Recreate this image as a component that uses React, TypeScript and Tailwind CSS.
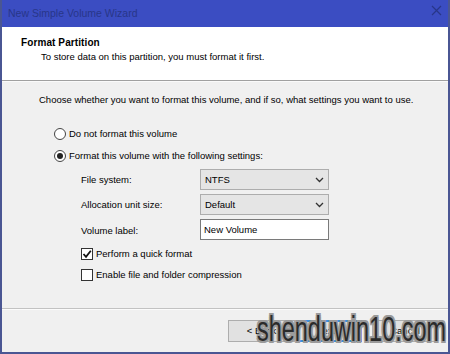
import React from "react";

function Chevron() {
  return (
    <svg width="9" height="6" viewBox="0 0 9 6" className="mr-[4px]">
      <polyline points="1,1 4.5,4.5 8,1" fill="none" stroke="#333" strokeWidth="1.3" />
    </svg>
  );
}

function Radio({ checked }: { checked?: boolean }) {
  return (
    <span className="w-[12px] h-[12px] rounded-full border border-[#444] bg-white flex items-center justify-center shrink-0">
      {checked && <span className="w-[6px] h-[6px] rounded-full bg-[#222]" />}
    </span>
  );
}

function Check({ checked }: { checked?: boolean }) {
  return (
    <span className="w-[12px] h-[12px] border border-[#333] bg-white flex items-center justify-center shrink-0">
      {checked && (
        <svg width="10" height="10" viewBox="0 0 10 10">
          <polyline points="1.5,5 4,7.8 8.8,1.8" fill="none" stroke="#111" strokeWidth="1.8" />
        </svg>
      )}
    </span>
  );
}

export default function App() {
  return (
    <div
      className="relative w-[450px] h-[354px] flex flex-col bg-[#f0f0f0] border-l-2 border-r-2 border-b-2 border-[#4a5693] text-[#000] overflow-hidden"
      style={{ fontFamily: '"Liberation Sans", Arial, sans-serif' }}
    >
      {/* Title bar */}
      <div className="h-[27px] bg-[#3b4dc2] flex items-center justify-between pl-[6px] pr-[6px] shrink-0">
        <span className="text-[10.5px] text-[#283689]">New Simple Volume Wizard</span>
        <svg width="11" height="11" viewBox="0 0 11 11" className="mb-[6px]">
          <path d="M1 1 L10 10 M10 1 L1 10" stroke="#283689" strokeWidth="1.2" />
        </svg>
      </div>

      {/* Header */}
      <div className="h-[53px] bg-white shrink-0 flex flex-col pl-[19px] pt-[9px]">
        <div className="text-[10px] font-bold leading-[13px] tracking-[0.1px]">Format Partition</div>
        <div className="text-[9.5px] leading-[12px] pl-[20px] mt-[2px]">
          To store data on this partition, you must format it first.
        </div>
      </div>
      <div className="h-px bg-[#a0a0a0] shrink-0" />
      <div className="h-px bg-[#fafafa] shrink-0" />

      {/* Body */}
      <div className="flex-1 flex flex-col pl-[37px] text-[9.5px] leading-[12px]">
        <div className="mt-[12px]">
          Choose whether you want to format this volume, and if so, what settings you want to use.
        </div>
        <div className="mt-[21px] ml-[15px] flex items-center gap-[3px] h-[14px]">
          <Radio />
          <span>Do not format this volume</span>
        </div>
        <div className="mt-[8px] ml-[15px] flex items-center gap-[3px] h-[14px]">
          <Radio checked />
          <span>Format this volume with the following settings:</span>
        </div>
        <div className="ml-[42px] mt-[6px] grid grid-cols-[119px_129px] gap-y-[4px]">
          <div className="flex items-center h-[21px]">File system:</div>
          <div className="h-[21px] border border-[#adadad] bg-[#e5e5e5] flex items-center justify-between pl-[4px]">
            <span>NTFS</span>
            <Chevron />
          </div>
          <div className="flex items-center h-[21px]">Allocation unit size:</div>
          <div className="h-[21px] border border-[#adadad] bg-[#e5e5e5] flex items-center justify-between pl-[4px]">
            <span>Default</span>
            <Chevron />
          </div>
          <div className="flex items-center h-[21px] pt-[2px]">Volume label:</div>
          <div className="h-[21px] border border-[#7a7a7a] bg-white flex items-center pl-[3px]">
            <span>New Volume</span>
          </div>
        </div>
        <div className="mt-[7px] ml-[42px] flex items-center gap-[3px] h-[14px]">
          <Check checked />
          <span>Perform a quick format</span>
        </div>
        <div className="mt-[7px] ml-[42px] flex items-center gap-[3px] h-[14px]">
          <Check />
          <span>Enable file and folder compression</span>
        </div>
      </div>

      {/* Footer */}
      <div className="h-px bg-[#c2c2c2] shrink-0" />
      <div className="h-px bg-[#fbfbfb] shrink-0" />
      <div className="h-[42px] shrink-0 flex items-start justify-end pr-[10px] pt-[10px] text-[9.5px]">
        <div className="w-[67px] h-[22px] border border-[#adadad] bg-[#e1e1e1] flex items-center justify-center">
          &lt; Back
        </div>
        <div className="ml-[2px] w-[65px] h-[22px] border-2 border-[#3c8ee0] bg-[#e1e1e1] flex items-center justify-center">
          Next &gt;
        </div>
        <div className="ml-[10px] w-[66px] h-[22px] border border-[#adadad] bg-[#e1e1e1] flex items-center justify-center">
          Cancel
        </div>
      </div>

      {/* Watermark */}
      <div
        className="absolute left-[255px] top-[309px] text-[35px] leading-[40px] text-[#2b2b2b] origin-left scale-x-[0.67] whitespace-nowrap"
        style={{
          fontFamily: '"Liberation Sans", Arial, sans-serif',
          textShadow:
            "2px 0 0 #9a9a9a, -2px 0 0 #9a9a9a, 0 2px 0 #9a9a9a, 0 -2px 0 #9a9a9a, 2px 2px 0 #9a9a9a, -2px -2px 0 #9a9a9a, 2px -2px 0 #9a9a9a, -2px 2px 0 #9a9a9a",
        }}
      >
        shenduwin10.com
      </div>
    </div>
  );
}
